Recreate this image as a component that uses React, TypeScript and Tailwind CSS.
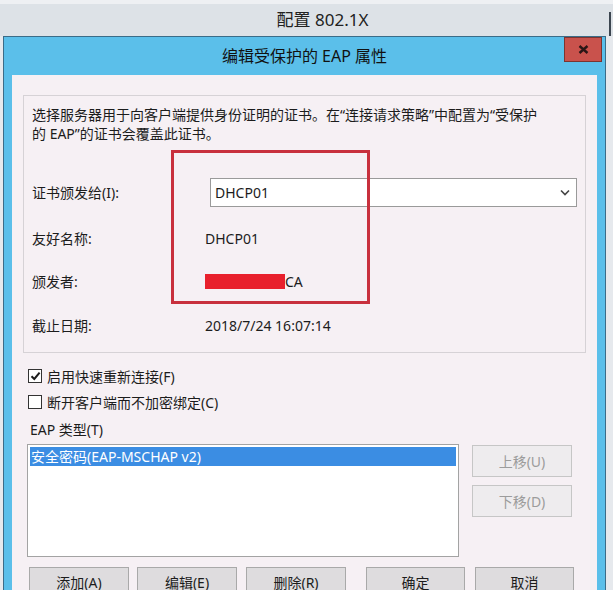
import * as React from "react";

const Btn: React.FC<{ label: string; className?: string; disabled?: boolean }> = ({ label, className, disabled }) => {
    return (
        <div
            className={
                "flex items-center justify-center border text-[14px] " +
                (disabled
                    ? "bg-[#eeecee] border-[#c6c6c6] text-[#9c9c9c] "
                    : "bg-[#dedcde] border-[#a9a9a9] text-[#1c1c1c] ") +
                (className ?? "")
            }
        >
            {label}
        </div>
    );
};

const Check: React.FC<{ checked?: boolean }> = ({ checked }) => {
    return (
        <div className="w-[14px] h-[14px] border border-[#333] bg-white flex items-center justify-center">
            {checked && (
                <svg width="11" height="10" viewBox="0 0 11 10">
                    <path d="M1.5 5.2 L4.3 8 L9.6 1.6" fill="none" stroke="#1c1c1c" strokeWidth="2" />
                </svg>
            )}
        </div>
    );
};

export default function App() {
    return (
        <div className="w-[613px] h-[590px] overflow-hidden bg-[#e6e9ed] flex flex-col font-['Noto_Sans','Noto_Sans_CJK_SC',sans-serif] text-[#1c1c1c]">
            {/* parent window caption */}
            <div className="h-[36px] shrink-0 flex items-center bg-[#dde2e7] border-t-[4px] border-t-[#eef0f3]">
                <div className="flex-1 pl-[36px] text-center text-[17px] text-[#222]">配置 802.1X</div>
                <div className="self-end mr-[2px] w-[2px] h-[24px] bg-[#3c4650]" />
            </div>

            {/* dialog */}
            <div className="ml-[3px] w-[603px] flex-1 flex flex-col border border-b-0 border-[#3b6c88] bg-[#5bbfea]">
                <div className="h-[38px] shrink-0 grid grid-cols-[1fr_auto_1fr]">
                    <div />
                    <div className="self-center text-[16px] text-[#111]">编辑受保护的 EAP 属性</div>
                    <div className="flex justify-end pr-[3px]">
                        <div className="w-[38px] h-[25px] bg-[#c9524c] border border-[#7c3430] flex items-center justify-center">
                            <svg width="11" height="9" viewBox="0 0 11 9">
                                <path d="M1.5 1 L9.5 8 M9.5 1 L1.5 8" stroke="#2a1616" strokeWidth="2.4" />
                            </svg>
                        </div>
                    </div>
                </div>

                <div className="mx-[8px] flex-1 bg-[#f6f0f4] flex flex-col relative">
                    {/* certificate group */}
                    <div className="mt-[20px] ml-[11px] w-[563px] h-[258px] border border-[#d6d2d6] pl-[8px] pt-[9px] text-[14px] flex flex-col">
                        <div className="leading-[19px]">
                            选择服务器用于向客户端提供身份证明的证书。在“连接请求策略”中配置为“受保护
                            <br />
                            的 EAP”的证书会覆盖此证书。
                        </div>

                        <div className="mt-[34px] h-[30px] flex items-center">
                            <div className="w-[173px]">证书颁发给(I):</div>
                            <div className="ml-[5px] w-[367px] h-[29px] bg-white border border-[#9a9a9a] flex items-center justify-between pl-[4px] pr-[6px]">
                                <span>DHCP01</span>
                                <svg width="10" height="7" viewBox="0 0 10 7">
                                    <path d="M1 1.5 L5 5.5 L9 1.5" fill="none" stroke="#444" strokeWidth="1.6" />
                                </svg>
                            </div>
                        </div>

                        <div className="mt-[16px] h-[30px] flex items-center">
                            <div className="w-[173px]">友好名称:</div>
                            <div>DHCP01</div>
                        </div>

                        <div className="mt-[13px] h-[30px] flex items-center">
                            <div className="w-[173px]">颁发者:</div>
                            <div className="flex items-center">
                                <span className="w-[80px] h-[15px] bg-[#e8202c]" />
                                <span>CA</span>
                            </div>
                        </div>

                        <div className="mt-[14px] h-[30px] flex items-center">
                            <div className="w-[173px]">截止日期:</div>
                            <div>2018/7/24 16:07:14</div>
                        </div>
                    </div>

                    {/* annotation box */}
                    <div className="absolute left-[159px] top-[75px] w-[199px] h-[154px] border-[3px] border-[#c8303d]" />

                    <div className="mt-[13px] ml-[16px] h-[20px] flex items-center gap-[5px] text-[14px]">
                        <Check checked />
                        <span>启用快速重新连接(F)</span>
                    </div>
                    <div className="mt-[6px] ml-[16px] h-[20px] flex items-center gap-[5px] text-[14px]">
                        <Check />
                        <span>断开客户端而不加密绑定(C)</span>
                    </div>
                    <div className="mt-[7px] ml-[18px] h-[20px] flex items-center text-[14px]">EAP 类型(T)</div>

                    <div className="mt-[5px] ml-[15px] flex">
                        <div className="w-[432px] h-[113px] bg-white border border-[#a3a3a3] p-[2px] text-[14px]">
                            <div className="h-[19px] bg-[#3b8de3] text-white flex items-center pl-[1px]">
                                安全密码(EAP-MSCHAP v2)
                            </div>
                        </div>
                        <div className="ml-[13px] flex flex-col">
                            <Btn label="上移(U)" disabled className="mt-[1px] w-[100px] h-[32px]" />
                            <Btn label="下移(D)" disabled className="mt-[8px] w-[100px] h-[32px]" />
                        </div>
                    </div>

                    <div className="mt-[10px] ml-[17px] flex">
                        <Btn label="添加(A)" className="w-[100px] h-[30px]" />
                        <Btn label="编辑(E)" className="ml-[8px] w-[100px] h-[30px]" />
                        <Btn label="删除(R)" className="ml-[9px] w-[100px] h-[30px]" />
                        <Btn label="确定" className="ml-[20px] w-[99px] h-[30px]" />
                        <Btn label="取消" className="ml-[10px] w-[99px] h-[30px]" />
                    </div>
                </div>
            </div>
        </div>
    );
}
